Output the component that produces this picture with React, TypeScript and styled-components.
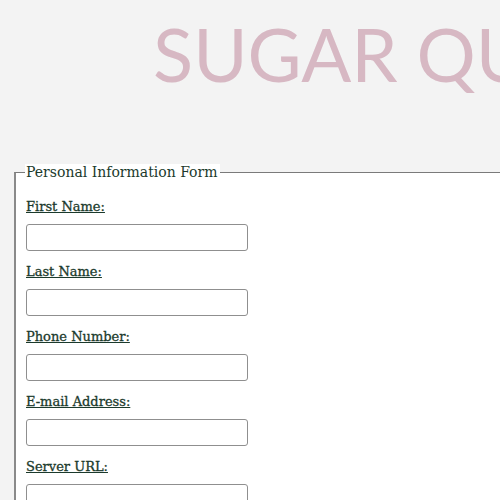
import React from "react";
import styled, { createGlobalStyle } from "styled-components";

const Global = createGlobalStyle`
  html, body { margin: 0; padding: 0; background: #f3f3f3; overflow: hidden; }
  body { width: 500px; height: 500px; }
`;

const Page = styled.div`
  width: 500px;
  height: 500px;
  overflow: hidden;
  display: flex;
  flex-direction: column;
`;

const Header = styled.header`
  flex: 0 0 164px;
  padding-left: 153px;
  box-sizing: border-box;
  white-space: nowrap;
  overflow: hidden;
`;

const Title = styled.h1`
  margin: 0;
  padding-top: 13px;
  font-family: Lato, "Open Sans", sans-serif;
  font-weight: 400;
  font-size: 74px;
  line-height: 82px;
  color: #d7b8c3;
`;

const Fieldset = styled.fieldset`
  margin: 0 0 0 14px;
  padding: 18px 0 0 10px;
  border: none;
  border-top: 1px solid #7a7a7a;
  border-left: 2px solid #8a8a8a;
  background: #ffffff;
  flex: 1;
  display: flex;
  flex-direction: column;
  min-width: 0;
`;

const Legend = styled.legend`
  background: #ffffff;
  padding: 0 2px 0 1px;
  margin-left: -1px;
  font-family: "DejaVu Serif", serif;
  font-size: 14px;
  color: #1b3a2c;
`;

const Field = styled.div`
  display: flex;
  flex-direction: column;
  gap: 8px;
  margin-bottom: 12px;
`;

const Label = styled.label`
  font-family: "DejaVu Serif", serif;
  font-size: 13px;
  font-weight: 400;
  -webkit-text-stroke: 0.3px #1b3a2c;
  color: #1b3a2c;
  text-decoration: underline;
  line-height: 18px;
`;

const Input = styled.input`
  box-sizing: border-box;
  width: 222px;
  height: 27px;
  border: 1px solid #8f8f8f;
  border-radius: 3px;
  background: #fff;
`;

const fields = ["First Name:", "Last Name:", "Phone Number:", "E-mail Address:", "Server URL:"];

export default function App() {
  return (
    <Page>
      <Global />
      <Header>
        <Title>SUGAR QUEEN</Title>
      </Header>
      <Fieldset>
        <Legend>Personal Information Form</Legend>
        {fields.map((f) => (
          <Field key={f}>
            <Label>{f}</Label>
            <Input type="text" />
          </Field>
        ))}
      </Fieldset>
    </Page>
  );
}
